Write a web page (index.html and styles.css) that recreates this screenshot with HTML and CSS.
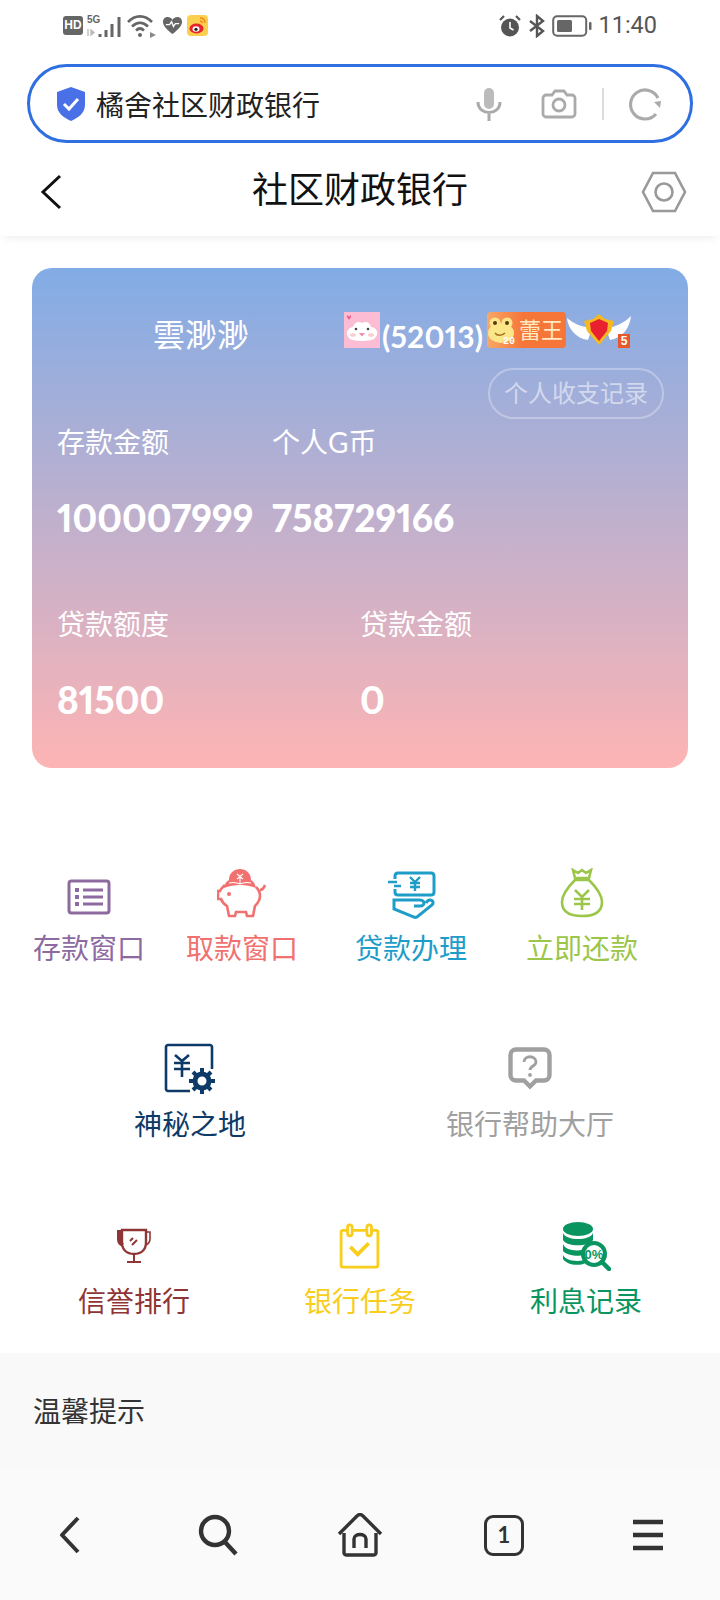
FILE: index.html
```html
<!DOCTYPE html>
<html lang="zh">
<head>
  <meta charset="UTF-8">
  <title>社区财政银行</title>
  <meta name="viewport" content="width=device-width, initial-scale=1.0">
  <link rel="stylesheet" href="styles.css">
</head>
<body>
  <!-- Status bar -->
  <div class="status-bar">
    <div class="status-group">
      <span class="hd-badge">HD</span>
      <svg width="36" height="26" viewBox="0 0 36 26">
        <text x="0" y="10" class="st-5g">5G</text>
        <path d="M1 16v7M4 17l3 2.500-3 2.500z" stroke="#bbb" stroke-width="1.4" fill="#bbb"/>
        <path d="M13 21v3M19 17v7M25 11v13M32 4v20" stroke="#666" stroke-width="3" fill="none"/>
      </svg>
      <svg width="31" height="24" viewBox="0 0 31 24" fill="none" stroke="#666" stroke-width="2.600">
        <path d="M1 8c7-7.500 17-7.500 24 0M5 12.500c5-5 11-5 16 0M9 16.500c2.500-2.500 5.500-2.500 8 0"/>
        <circle cx="13" cy="21" r="2" fill="#666" stroke="none"/>
        <path d="M23 18l6 3-6 3z" fill="#888" stroke="none"/>
      </svg>
      <svg width="21" height="21" viewBox="0 0 22 22">
        <path d="M11 20C5 15 1 11.500 1 7c0-3 2.300-5 5-5 2 0 3.800 1 5 3 1.200-2 3-3 5-3 2.700 0 5 2 5 5 0 4.500-4 8-10 13z" fill="#666"/>
        <path d="M4 10h4l2-3 2 5 2-3h4" fill="none" stroke="#fff" stroke-width="1.400"/>
      </svg>
      <svg width="21" height="21" viewBox="0 0 21 21">
        <rect width="21" height="21" rx="4" fill="#fbd04f"/>
        <ellipse cx="9.500" cy="13.500" rx="7" ry="5" fill="#e6242b"/>
        <ellipse cx="9" cy="14" rx="3.500" ry="2.800" fill="#fff"/>
        <circle cx="9" cy="14.300" r="1.600" fill="#222"/>
        <path d="M13 3c3 0 5 2 5 5M13 6c1.300 0 2.300 1 2.300 2.300" fill="none" stroke="#f58a1f" stroke-width="1.500"/>
      </svg>
    </div>
    <div class="status-group status-right">
      <svg width="24" height="24" viewBox="0 0 24 24">
        <circle cx="12" cy="13.500" r="9" fill="#555"/>
        <path d="M12 8v6l3.500 2" fill="none" stroke="#fff" stroke-width="1.600"/>
        <path d="M2 6l4-4M22 6l-4-4" stroke="#555" stroke-width="2.200"/>
      </svg>
      <svg width="18" height="24" viewBox="0 0 18 24" fill="none" stroke="#555" stroke-width="2.400">
        <path d="M2 7l13 10-6 5V2l6 5L2 17"/>
      </svg>
      <svg width="40" height="24" viewBox="0 0 40 24">
        <rect x="1.200" y="2.200" width="33" height="19.600" rx="4" fill="none" stroke="#666" stroke-width="2"/>
        <rect x="5" y="6" width="15" height="12" rx="1.500" fill="#666"/>
        <rect x="37" y="8" width="2.500" height="8" rx="1" fill="#666"/>
      </svg>
      <span class="st-time">11:40</span>
    </div>
  </div>

  <!-- Address bar -->
  <div class="address-bar">
    <svg width="32" height="36" viewBox="0 0 32 36">
      <path d="M16 1l14 5v13c0 8-7 13-14 16C9 32 2 27 2 19V6z" fill="#4a70e8"/>
      <path d="M9 18l5 5 9-10" fill="none" stroke="#fff" stroke-width="3"/>
    </svg>
    <span class="address-text">橘舍社区财政银行</span>
    <svg class="addr-mic" width="28" height="36" viewBox="0 0 28 36" fill="none" stroke="#aaa" stroke-width="3">
      <rect x="9" y="2" width="10" height="21" rx="5" fill="#bbb" stroke="none"/>
      <path d="M3 16c0 14 22 14 22 0M14 28v7"/>
    </svg>
    <svg class="addr-cam" width="36" height="32" viewBox="0 0 36 32" fill="none" stroke="#aaa" stroke-width="2.800">
      <path d="M5 7h6l3-4h9l3 4h5c1.500 0 3 1.500 3 3v16c0 1.500-1.500 3-3 3H5c-1.500 0-3-1.500-3-3V10c0-1.500 1.500-3 3-3z"/>
      <circle cx="18" cy="17" r="6"/>
    </svg>
    <span class="addr-divider"></span>
    <svg width="34" height="34" viewBox="0 0 34 34" fill="none" stroke="#aaa" stroke-width="3.200">
      <path d="M29 11A14.500 14.500 0 1 0 27 27"/>
      <path d="M25 15l7-1-1 7z" fill="#aaa" stroke="none"/>
    </svg>
  </div>

  <!-- Page header -->
  <div class="page-header">
    <svg class="header-back" width="22" height="36" viewBox="0 0 22 36" fill="none" stroke="#111" stroke-width="3">
      <path d="M20 2L3 18l17 16"/>
    </svg>
    <div class="page-title">社区财政银行</div>
    <svg class="header-gear" width="46" height="42" viewBox="0 0 46 42" fill="none" stroke="#999" stroke-width="2.600">
      <path d="M12 2h22l10 19-10 19H12L2 21z"/>
      <circle cx="23" cy="21" r="8.500"/>
    </svg>
  </div>

  <!-- Account card -->
  <div class="bank-card">
    <div class="name-row">
      <span class="user-name">雲渺渺</span>
      <span class="user-badges">
        <svg width="36" height="36" viewBox="0 0 36 36">
          <rect width="36" height="36" fill="#fbbcd4"/>
          <path d="M5 26c-5-5 0-11 4-11 1-5 6-6 9-4 4-2 8-1 9 4 5 0 9 6 4 11-2 4-24 4-26 0z" fill="#fff"/>
          <circle cx="12" cy="17" r="1.300" fill="#444"/>
          <circle cx="24" cy="17" r="1.300" fill="#444"/>
          <path d="M15 21h6l-3 3.500z" fill="#f28aa8"/>
          <ellipse cx="9" cy="23" rx="3" ry="1.800" fill="#fcc"/>
          <ellipse cx="27" cy="23" rx="3" ry="1.800" fill="#fcc"/>
          <path d="M3 3l2 1.500L7 3v2L5 8 3 5z" fill="#f0608c"/>
        </svg>
        <span class="user-level">(52013)</span>
        <span class="frog-badge">
          <svg width="30" height="32" viewBox="0 0 30 32">
            <ellipse cx="14" cy="19" rx="13" ry="10" fill="#fce68a"/>
            <circle cx="8" cy="9" r="5.500" fill="#fce68a"/>
            <circle cx="20" cy="9" r="5.500" fill="#fce68a"/>
            <circle cx="8" cy="9" r="2" fill="#5a3b12"/>
            <circle cx="20" cy="9" r="2" fill="#5a3b12"/>
            <path d="M8 19c2 3 7 3 10 0" fill="none" stroke="#a6701f" stroke-width="1.500"/>
          </svg>
          <span class="frog-num">20</span>
          <span class="frog-title">蕾王</span>
        </span>
        <span class="wing-badge">
          <svg width="66" height="36" viewBox="0 0 66 36">
            <path d="M1 6c1 10 8 20 21 22l4-12C16 15 8 12 1 6zM65 4c-1 11-8 22-21 24l-4-12c10-1 18-5 25-12z" fill="#fff"/>
            <path d="M33 2l6 5 9 2-3 10-12 14-12-14-3-10 9-2z" fill="#f5b921"/>
            <path d="M33 7l9 4-1 8-8 10-8-10-1-8z" fill="#e8202f"/>
          </svg>
          <span class="wing-num">5</span>
        </span>
      </span>
    </div>
    <div class="card-actions">
      <a class="records-btn">个人收支记录</a>
    </div>
    <div class="stat-row stat-row-top">
      <div class="stat stat-deposit">
        <div class="stat-label">存款金额</div>
        <div class="stat-value">100007999</div>
      </div>
      <div class="stat">
        <div class="stat-label">个人G币</div>
        <div class="stat-value">758729166</div>
      </div>
    </div>
    <div class="stat-row">
      <div class="stat stat-credit">
        <div class="stat-label">贷款额度</div>
        <div class="stat-value">81500</div>
      </div>
      <div class="stat">
        <div class="stat-label">贷款金额</div>
        <div class="stat-value">0</div>
      </div>
    </div>
  </div>

  <!-- Menu -->
  <div class="menu-row menu-four">
    <a class="menu-item purple">
      <span class="menu-icon">
        <svg width="44" height="36" viewBox="0 0 44 36" fill="none" stroke="currentColor">
          <rect x="2" y="2" width="40" height="32" rx="2.500" stroke-width="3"/>
          <path d="M16 11h20M16 18h20M16 25h20" stroke-width="3"/>
          <path d="M8 11h4M8 18h4M8 25h4" stroke-width="4"/>
        </svg>
      </span>
      <span class="menu-label">存款窗口</span>
    </a>
    <a class="menu-item red">
      <span class="menu-icon icon-up">
        <svg width="50" height="50" viewBox="0 0 50 50" fill="none" stroke="currentColor" stroke-width="2.600">
          <path d="M8 17c-2 2-4 3-5 6H1v8h3c1 3 3 5 6 7l2 10h6l1-4h10l1 4h6l2-10c3-3 5-7 5-10 0-4-2-7-4-9"/>
          <path d="M43 22c2 0 4-2 5-5"/>
          <path d="M12 12C12 5 17 1 23 1s11 4 11 11c2 1 4 3 5 8-10-4-22-4-32 0 1-5 3-7 5-8z" fill="currentColor" stroke="none"/>
          <path d="M20 6l6 5M26 6l-6 5M23 10v6M12 15c4-1 7-1 11 1 4-2 7-2 11-1" stroke="#fff" stroke-width="1.100"/>
          <circle cx="12" cy="26" r="2" fill="currentColor" stroke="none"/>
        </svg>
      </span>
      <span class="menu-label">取款窗口</span>
    </a>
    <a class="menu-item blue">
      <span class="menu-icon icon-up-small">
        <svg width="50" height="48" viewBox="0 0 50 48" fill="none" stroke="currentColor" stroke-width="3">
          <path d="M9 8V5c0-2 1-3 3-3h33c2 0 3 1 3 3v16c0 2-1 3-3 3H12c-2 0-3-1-3-3v-3"/>
          <path d="M2 11h9M8 15h7" stroke-width="2.600"/>
          <path d="M24 6l5 5 5-5M29 11v9M24 12h10M24 16h10" stroke-width="2.400"/>
          <path d="M28 35h6c3 0 4-2 4-3s-1-3-4-3H8v9l20 8c1 .5 2 .5 3 0l15-12c2-2 1-5-2-5-2 0-3 1-4 3"/>
        </svg>
      </span>
      <span class="menu-label">贷款办理</span>
    </a>
    <a class="menu-item green">
      <span class="menu-icon icon-up">
        <svg width="44" height="50" viewBox="0 0 44 50" fill="none" stroke="currentColor" stroke-width="2.600">
          <path d="M13 2l5 3 4-3 4 3 5-3-2 8H15z"/>
          <path d="M15 12C8 19 2 26 2 34c0 9 6 14 20 14s20-5 20-14c0-8-6-15-13-22z"/>
          <path d="M15 22l7 7 7-7M22 29v13M14 31h16M14 36h16"/>
        </svg>
      </span>
      <span class="menu-label">立即还款</span>
    </a>
  </div>

  <div class="menu-row menu-two">
    <a class="menu-item navy">
      <span class="menu-icon">
        <svg width="52" height="52" viewBox="0 0 52 52" fill="none" stroke="currentColor" stroke-width="2.600">
          <path d="M26 48H4c-1 0-2-1-2-2V4c0-1 1-2 2-2h42c1 0 2 1 2 2v22"/>
          <path d="M11 12l7 6 7-6M18 18v16M10 20h16M10 26h16"/>
          <circle cx="38" cy="38" r="7" stroke-width="5"/>
          <path d="M38 25v5M38 46v5M25 38h5M46 38h5M29 29l3 3M44 44l3 3M29 47l3-3M44 32l3-3" stroke-width="4"/>
        </svg>
      </span>
      <span class="menu-label">神秘之地</span>
    </a>
    <a class="menu-item gray">
      <span class="menu-icon">
        <svg width="44" height="44" viewBox="0 0 44 44" fill="none" stroke="currentColor" stroke-width="4.400">
          <path d="M8 2.500h28c3 0 5.500 2.500 5.500 5.500v20c0 3-2.500 5.500-5.500 5.500h-8l-6 6-6-6H8c-3 0-5.500-2.500-5.500-5.500V8c0-3 2.500-5.500 5.500-5.500z"/>
          <path d="M16 15c0-7 12-7 12 0 0 4-6 4-6 8" stroke-width="2.800"/>
          <circle cx="22" cy="28" r="1.900" fill="currentColor" stroke="none"/>
        </svg>
      </span>
      <span class="menu-label">银行帮助大厅</span>
    </a>
  </div>

  <div class="menu-row menu-three">
    <a class="menu-item brown">
      <span class="menu-icon">
        <svg width="36" height="36" viewBox="0 0 36 36" fill="none" stroke="currentColor" stroke-width="2.400">
          <path d="M6 2h24v12c0 8-5 12-12 12S6 22 6 14z"/>
          <path d="M6 4H3v7c0 3 1.500 5 4 6" stroke-width="4"/>
          <path d="M30 4h4v7c0 3-2 5-4 6" stroke-width="1.600"/>
          <path d="M18 26v7M11 34h14M14 13l3-3M16 17l5-5" stroke-width="2"/>
        </svg>
      </span>
      <span class="menu-label">信誉排行</span>
    </a>
    <a class="menu-item yellow">
      <span class="menu-icon">
        <svg width="41" height="46" viewBox="0 0 44 50" fill="none" stroke="currentColor" stroke-width="3">
          <path d="M9 8H4c-1 0-2 1-2 2v36c0 1 1 2 2 2h36c1 0 2-1 2-2V10c0-1-1-2-2-2h-5M15 8h14"/>
          <rect x="9" y="2" width="5" height="12" rx="2.500"/>
          <rect x="30" y="2" width="5" height="12" rx="2.500"/>
          <path d="M12 26l8 8 12-12" stroke-width="4"/>
        </svg>
      </span>
      <span class="menu-label">银行任务</span>
    </a>
    <a class="menu-item teal">
      <span class="menu-icon">
        <svg width="50" height="50" viewBox="0 0 50 50">
          <ellipse cx="17" cy="8" rx="15" ry="7" fill="currentColor"/>
          <path d="M2 12c3 8 27 8 30 0v7c-3 7-27 7-30 0zM2 23c3 8 20 8 24 3l-2 8c-8 2-19 0-22-4zM2 34c3 6 14 7 21 5l2 3c-9 4-20 1-23-4z" fill="currentColor"/>
          <circle cx="33" cy="33" r="11" fill="#fff" stroke="currentColor" stroke-width="4"/>
          <path d="M41 41l7 7" stroke="currentColor" stroke-width="4.500" stroke-linecap="round"/>
          <text x="33" y="38" class="pct-text" fill="currentColor">0%</text>
        </svg>
      </span>
      <span class="menu-label">利息记录</span>
    </a>
  </div>

  <!-- Tip -->
  <div class="tip-area">
    <div class="tip-title">温馨提示</div>
  </div>

  <!-- Browser toolbar -->
  <div class="bottom-nav">
    <svg class="nav-back" width="26" height="40" viewBox="0 0 26 40" fill="none" stroke="#333" stroke-width="4" stroke-linejoin="round">
      <path d="M21 3L5 20l16 17"/>
    </svg>
    <svg class="nav-search" width="42" height="42" viewBox="0 0 42 42" fill="none" stroke="#333" stroke-width="4.400">
      <circle cx="17" cy="17" r="14"/>
      <path d="M26 27l12 13"/>
    </svg>
    <svg width="46" height="44" viewBox="0 0 46 44" fill="none" stroke="#333" stroke-width="3.400">
      <path d="M2 21L20 3c2-2 4-2 6 0l18 18"/>
      <path d="M7 20v20c0 1 1 2 2 2h28c1 0 2-1 2-2V20"/>
      <path d="M17 35v-9c0-6 12-6 12 0v9"/>
    </svg>
    <span class="tab-count">1</span>
    <svg width="32" height="32" viewBox="0 0 32 32" stroke="#333" stroke-width="4.400">
      <path d="M1 3h30M1 16h30M1 29h30"/>
    </svg>
  </div>
</body>
</html>
```

FILE: styles.css
```css
* {
  box-sizing: border-box;
}
body {
  margin: 0;
  width: 720px;
  height: 1600px;
  overflow: hidden;
  background: #fff;
  font-family: Lato, 'Noto Sans CJK SC', sans-serif;
  display: flex;
  flex-direction: column;
}
.status-bar {
  height: 48px;
  padding: 3px 63px 0 63px;
  display: flex;
  justify-content: space-between;
  align-items: center;
}
.status-group {
  display: flex;
  align-items: center;
  gap: 4px;
}
.status-right {
  gap: 6px;
}
.hd-badge {
  width: 20px;
  height: 19px;
  background: #666;
  color: #fff;
  border-radius: 3px;
  font: bold 12px/19px 'Liberation Sans', sans-serif;
  text-align: center;
}
.st-5g {
  font: bold 10px 'Liberation Sans', sans-serif;
  fill: #666;
}
.st-time {
  font: 23.500px/1 Roboto, sans-serif;
  color: #555;
}
.address-bar {
  margin: 16px 27px 0 27px;
  height: 79px;
  border: 3px solid #2f6fe0;
  border-radius: 40px;
  padding: 0 27px 0 25px;
  display: flex;
  align-items: center;
}
.address-text {
  font-size: 28px;
  color: #222;
  margin-left: 9px;
}
.addr-mic {
  margin-left: auto;
}
.addr-cam {
  margin-left: 38px;
}
.addr-divider {
  width: 2px;
  height: 32px;
  background: #ddd;
  margin: 0 25px;
}
.page-header {
  position: relative;
  height: 93px;
  padding: 0 33px;
  display: grid;
  grid-template-columns: 1fr auto 1fr;
  align-items: center;
  box-shadow: 0 6px 8px -4px rgba(0, 0, 0, 0.07);
}
.header-back {
  margin: 4px 0 0 7px;
}
.page-title {
  font-size: 36px;
  color: #111;
  margin-bottom: 6px;
}
.header-gear {
  justify-self: end;
  margin-top: 4px;
}
.bank-card {
  margin: 32px 32px 0 32px;
  height: 500px;
  border-radius: 20px;
  padding: 44px 24px 0 25px;
  background: linear-gradient(180deg, #82ace6, #fdb4b4);
  color: #fff;
  font-variant-numeric: proportional-nums;
}
.name-row {
  display: flex;
  align-items: flex-start;
  gap: 95px;
  padding-left: 96px;
  height: 36px;
}
.user-name {
  font-size: 32px;
  line-height: 36px;
  padding-top: 5px;
}
.user-badges {
  display: flex;
  align-items: flex-start;
}
.user-level {
  font-size: 30px;
  font-weight: bold;
  line-height: 36px;
  width: 107px;
  padding: 6px 0 0 2px;
  letter-spacing: 0.2px;
}
.frog-badge {
  position: relative;
  width: 79px;
  height: 36px;
  border-radius: 4px;
  background: linear-gradient(90deg, #f8a867, #f6763a 45%);
  display: flex;
  align-items: center;
}
.frog-num {
  position: absolute;
  left: 16px;
  bottom: 0;
  font: bold 10px/12px 'Liberation Mono', monospace;
}
.frog-title {
  margin-left: 2px;
  font-size: 22px;
  line-height: 36px;
  color: #ffe9c0;
}
.wing-badge {
  position: relative;
  height: 36px;
}
.wing-num {
  position: absolute;
  right: 2px;
  bottom: 0;
  width: 12px;
  background: #e8582a;
  font: bold 12px/14px 'Liberation Sans', sans-serif;
  text-align: center;
}
.card-actions {
  display: flex;
  justify-content: flex-end;
  margin-top: 20px;
}
.records-btn {
  width: 176px;
  height: 51px;
  border: 2px solid rgba(255, 255, 255, 0.3);
  border-radius: 26px;
  font-size: 24px;
  line-height: 46px;
  text-align: center;
  color: rgba(255, 255, 255, 0.55);
}
.stat-row {
  display: flex;
  margin-top: 64px;
}
.stat-row-top {
  margin-top: 3px;
}
.stat-deposit {
  width: 215px;
}
.stat-credit {
  width: 303px;
}
.stat-label {
  font-size: 28px;
  line-height: 40px;
}
.stat-value {
  margin-top: 34px;
  font-size: 37px;
  font-weight: 900;
  line-height: 44px;
}
.menu-row {
  display: grid;
}
.menu-four {
  margin-top: 100px;
  padding-left: 33px;
  grid-template-columns: 153px 169px 171px auto;
}
.menu-two {
  margin-top: 72px;
  padding: 0 20px;
  grid-template-columns: 1fr 1fr;
}
.menu-three {
  margin-top: 73px;
  padding: 0 21px;
  grid-template-columns: repeat(3, 1fr);
}
.menu-item {
  display: flex;
  flex-direction: column;
  align-items: center;
  gap: 6px;
  justify-self: center;
}
.menu-four .menu-item {
  justify-self: start;
  gap: 2px;
}
.menu-icon {
  height: 58px;
  display: flex;
  align-items: center;
  justify-content: center;
}
.icon-up {
  padding-bottom: 9px;
}
.icon-up-small {
  padding-bottom: 5px;
}
.menu-label {
  font-size: 28px;
  line-height: 40px;
}
.purple { color: #8d6a9f; }
.red { color: #f0716f; }
.blue { color: #1f9dc9; }
.green { color: #9cc64a; }
.navy { color: #0d3a66; }
.gray { color: #a0a0a0; }
.brown { color: #8f3535; }
.yellow { color: #f9cd1b; }
.teal { color: #0a9560; }
.pct-text {
  font: bold 13px 'Liberation Sans', sans-serif;
  text-anchor: middle;
}
.tip-area {
  margin-top: 32px;
  flex: 1;
  background: #f9f9f9;
  padding: 38px 33px 0 33px;
}
.tip-title {
  font-size: 28px;
  line-height: 40px;
  color: #333;
}
.bottom-nav {
  height: 130px;
  background: #fafafa;
  display: grid;
  grid-template-columns: repeat(5, 144px);
  justify-items: center;
  align-items: center;
}
.nav-back {
  margin-right: 4px;
}
.nav-search {
  margin-left: 5px;
}
.tab-count {
  width: 40px;
  height: 41px;
  border: 3.500px solid #333;
  border-radius: 9px;
  color: #333;
  font: bold 22px/34px Lato, sans-serif;
  text-align: center;
}
```
